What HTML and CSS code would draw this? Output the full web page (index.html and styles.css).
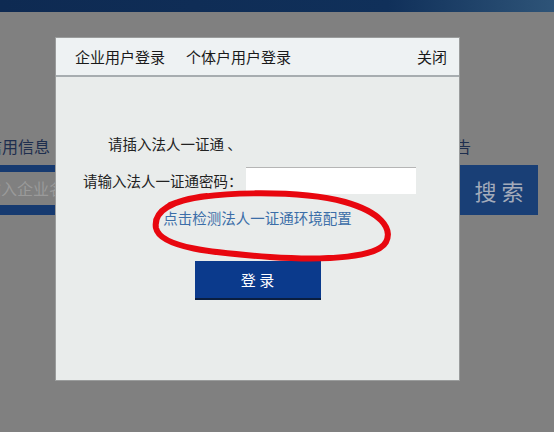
FILE: index.html
```html
<!DOCTYPE html>
<html lang="zh-CN">
<head>
    <meta charset="UTF-8">
    <title>法人一证通登录</title>
    <link rel="stylesheet" href="styles.css">
</head>
<body>
    <div class="topbar"></div>

    <div class="nav">
        <span class="nav-item first">信用信息</span>
        <span class="nav-item last">公告</span>
    </div>

    <div class="search">
        <div class="search-input">请输入企业名称</div>
        <button class="search-btn">搜 索</button>
    </div>

    <!-- 登录弹窗 -->
    <div class="modal">
        <div class="modal-head">
            <div class="tabs">
                <span class="tab">企业用户登录</span>
                <span class="tab">个体户用户登录</span>
            </div>
            <span class="close">关闭</span>
        </div>
        <div class="modal-body">
            <div class="tip">请插入法人一证通 、</div>
            <div class="pwd-row">
                <label for="pwd">请输入法人一证通密码：</label>
                <input type="password" id="pwd">
            </div>
            <a class="check-link" href="#">点击检测法人一证通环境配置</a>
            <button class="login-btn">登 录</button>
        </div>
    </div>

    <svg class="mark" width="554" height="432" viewBox="0 0 554 432">
        <path d="M170 205 C 205 190, 300 190, 345 202 C 380 212, 393 228, 386 242 C 378 257, 330 261, 270 257 C 215 253, 160 248, 156 228 C 153 211, 172 200, 207 196" fill="none" stroke="#e8070f" stroke-width="6" stroke-linecap="round"/>
    </svg>
</body>
</html>
```

FILE: styles.css
```css
body {
    margin: 0;
    width: 554px;
    height: 432px;
    overflow: hidden;
    background-color: #808080;
    font-family: "Noto Sans CJK SC", sans-serif;
    position: relative;
}

.topbar {
    height: 12px;
    background: linear-gradient(to right, #0e2a52, #10305a 70%, #2e5478);
}

.nav {
    display: flex;
    justify-content: space-between;
    margin-left: -14px;
    padding: 124px 83px 0 0;
    height: 20px;
    line-height: 20px;
    font-size: 16px;
    color: #1e2e4e;
}

.search {
    display: flex;
    margin-top: 9px;
    margin-left: -60px;
    height: 50px;
}

.search-input {
    width: 520px;
    box-sizing: border-box;
    border-top: 7px solid #163a70;
    border-bottom: 10px solid #163a70;
    padding-left: 29px;
    line-height: 33px;
    font-size: 16px;
    color: #9a9a9a;
}

.search-btn {
    width: 78px;
    height: 50px;
    border: none;
    padding: 0;
    background-color: #193f76;
    color: #a3abba;
    font-family: inherit;
    font-size: 22px;
}

/* 弹窗 */
.modal {
    position: absolute;
    left: 55px;
    top: 37px;
    width: 403px;
    height: 342px;
    background-color: #e9eceb;
    border: 1px solid #9a9c9c;
}

.modal-head {
    display: flex;
    justify-content: space-between;
    align-items: center;
    height: 37px;
    padding: 0 12px 0 19px;
    background-color: #eef2f3;
    border-bottom: 2px solid #a7adb0;
    font-size: 15px;
    color: #1a1a1a;
}

.tabs {
    display: flex;
    gap: 21px;
}

.modal-body {
    display: flex;
    flex-direction: column;
    padding-top: 57px;
    font-size: 14.5px;
    color: #222;
}

.tip {
    line-height: 20px;
    padding-left: 52px;
}

.pwd-row {
    display: flex;
    align-items: center;
    margin-top: 13px;
    padding-left: 27px;
}

.pwd-row input {
    width: 170px;
    height: 27px;
    box-sizing: border-box;
    margin-left: 3px;
    border: none;
    border-top: 1px solid #b5b5b5;
    background-color: #fff;
}

.check-link {
    align-self: center;
    margin-top: 14px;
    line-height: 20px;
    font-size: 14.5px;
    color: #3b6ea8;
    text-decoration: none;
}

.login-btn {
    align-self: center;
    width: 126px;
    height: 39px;
    margin-top: 33px;
    border: none;
    border-bottom: 2px solid #0a1e40;
    background-color: #0b3a8c;
    color: #fff;
    font-family: inherit;
    font-size: 15px;
}

.mark {
    position: absolute;
    left: 0;
    top: 0;
    pointer-events: none;
}
```
